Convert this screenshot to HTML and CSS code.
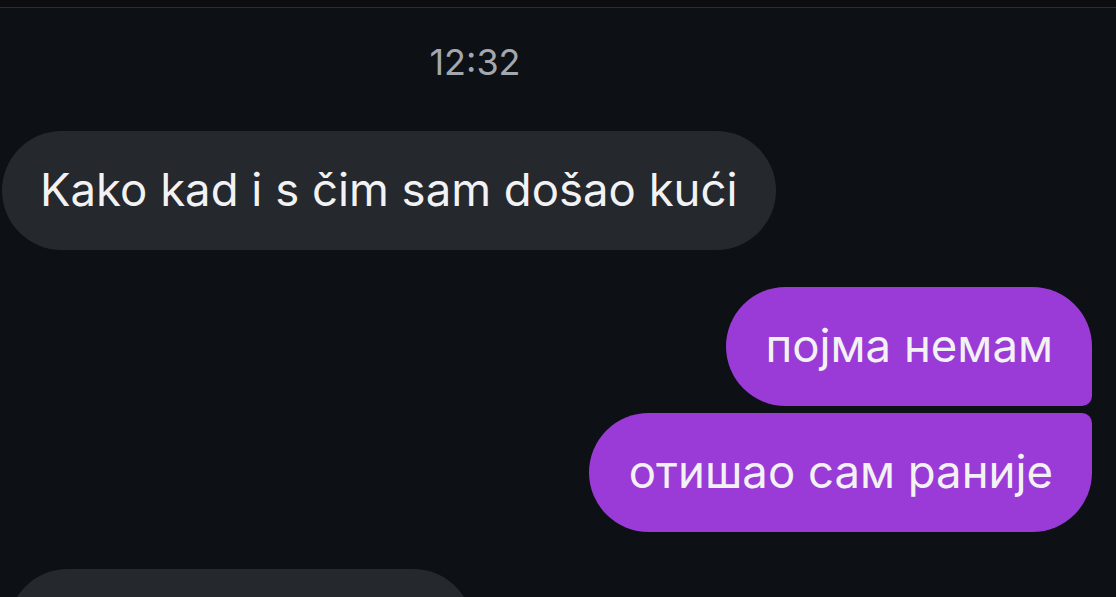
FILE: index.html
```html
<!DOCTYPE html>
<html lang="sr">
<head>
<meta charset="utf-8">
<title>Chat</title>
<link rel="stylesheet" href="styles.css">
</head>
<body>
  <div class="topbar"></div>
  <main class="chat">
    <div class="time">12:32</div>
    <div class="row in">
      <div class="bubble gray">Kako kad i s čim sam došao kući</div>
    </div>
    <div class="group out">
      <div class="bubble purple first">појма немам</div>
      <div class="bubble purple last">отишао сам раније</div>
    </div>
    <div class="row in">
      <div class="bubble gray next">&nbsp;</div>
    </div>
  </main>
</body>
</html>
```
FILE: styles.css
```css
* { box-sizing: border-box; }
html, body {
  margin: 0;
  height: 100%;
  background: #0d1014;
  overflow: hidden;
}
body {
  font-family: Inter, "Noto Sans", sans-serif;
  color: #f2f2f4;
}
.topbar {
  height: 8px;
  background: #0b0d10;
  border-bottom: 1px solid #2a2d32;
}
.chat {
  display: flex;
  flex-direction: column;
  padding: 0 24px 0 2px;
}
.time {
  width: 946px;
  text-align: center;
  font-size: 36px;
  line-height: 44px;
  color: #a3a7ae;
  margin-top: 32px;
}
.row { display: flex; }
.row.in { margin-top: 47px; }
.group {
  display: flex;
  flex-direction: column;
  align-items: flex-end;
  gap: 7px;
  margin-top: 37px;
}
.bubble {
  font-size: 45.5px;
  line-height: 56px;
  padding: 31px 39px 32px 40px;
  border-radius: 60px;
  white-space: nowrap;
}
.gray { background: #25282d; }
.gray:not(.next) { padding-left: 38px; padding-right: 38px; }
.purple { background: #9a3bd7; }
.purple.first { border-bottom-right-radius: 10px; }
.purple.last { border-top-right-radius: 10px; }
.next { width: 465px; margin-left: 6px; }
.group + .row.in { margin-top: 37px; }
```
